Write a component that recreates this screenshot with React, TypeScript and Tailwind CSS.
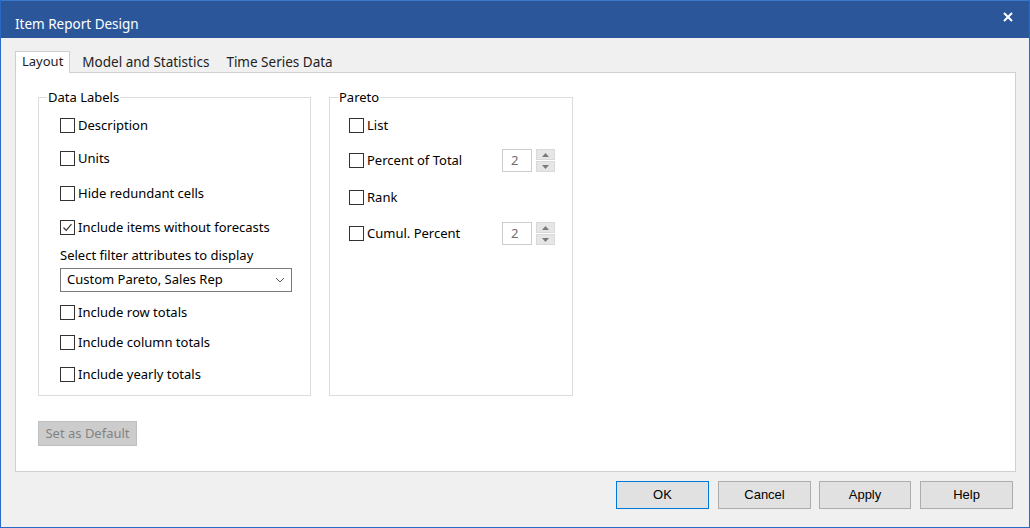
import React from "react";

const font = { fontFamily: '"Noto Sans", "Open Sans", sans-serif' };

function Check({ label, checked = false }: { label: string; checked?: boolean }) {
  return (
    <div className="flex items-center h-[16px]">
      <div className="w-[15px] h-[15px] border border-[#333333] bg-white flex items-center justify-center mr-[3px] shrink-0">
        {checked && (
          <svg width="11" height="11" viewBox="0 0 11 11">
            <path d="M1.5 5.5 L4.2 8.3 L9.5 2.2" fill="none" stroke="#333" strokeWidth="1.2" />
          </svg>
        )}
      </div>
      <span className="text-[13px] text-black leading-none whitespace-nowrap">{label}</span>
    </div>
  );
}

function Spin() {
  return (
    <div className="flex items-center gap-[4px]">
      <div className="w-[30px] h-[23px] border border-[#cccccc] bg-white text-[13px] text-[#6d6d6d] flex items-center pl-[8px]">2</div>
      <div className="w-[19px] h-[23px] flex flex-col gap-[1px]">
        <div className="flex-1 bg-[#e6e6e6] border border-[#d9d9d9] flex items-center justify-center">
          <svg width="7" height="4" viewBox="0 0 7 4"><path d="M0 4 L3.5 0 L7 4Z" fill="#7a7a7a" /></svg>
        </div>
        <div className="flex-1 bg-[#e6e6e6] border border-[#d9d9d9] flex items-center justify-center">
          <svg width="7" height="4" viewBox="0 0 7 4"><path d="M0 0 L3.5 4 L7 0Z" fill="#7a7a7a" /></svg>
        </div>
      </div>
    </div>
  );
}

function Btn({ label, primary = false, w = 93 }: { label: string; primary?: boolean; w?: number }) {
  return (
    <div
      className={`h-[28px] bg-[#e1e1e1] border ${primary ? "border-[#0078d7]" : "border-[#adadad]"} flex items-center justify-center text-[13px] text-black`}
      style={{ fontFamily: '"Liberation Sans", Arial, sans-serif', width: w }}
    >
      {label}
    </div>
  );
}

export default function App() {
  return (
    <div className="w-[1030px] h-[528px] bg-[#f0f0f0] border border-[#2a6ac4] border-t-0 flex flex-col overflow-hidden" style={font}>
      <div className="h-[38px] bg-[#2b579a] border-t border-[#3a78cc] flex items-center justify-between pl-[14px] pr-[16px] pt-[9px] shrink-0">
        <span className="text-white text-[13.5px]">Item Report Design</span>
        <svg width="10" height="10" viewBox="0 0 10 10" className="-mt-[14px]">
          <path d="M1 1 L9 9 M9 1 L1 9" stroke="white" strokeWidth="2" />
        </svg>
      </div>
      <div className="flex flex-col pl-[14px] pr-[13px] pt-[12px]">
        <div className="flex items-end h-[22px] text-[13.5px] text-[#222]">
          <div className="h-[22px] px-[6px] bg-white border border-[#cfcfcf] border-b-0 flex items-center relative z-10 -mb-[1px] pb-[1px] text-[13px]">
            Layout
          </div>
          <div className="h-[20px] pl-[12px] pr-[9px] flex items-center">Model and Statistics</div>
          <div className="h-[20px] px-[8px] flex items-center">Time Series Data</div>
        </div>
        <div className="h-[400px] bg-white border border-[#d0d0d0] pl-[22px] pt-[16px] flex flex-col">
          <div className="flex gap-[18px]">
            <fieldset className="w-[273px] h-[307px] border border-[#dcdcdc] pl-[21px] pr-[8px] m-0 pt-0">
              <legend className="text-[13px] text-black px-[1px] ml-[-13px] leading-[16px]">Data Labels</legend>
              <div className="flex flex-col pt-[12px]">
                <Check label="Description" />
                <div className="h-[17px]" />
                <Check label="Units" />
                <div className="h-[19px]" />
                <Check label="Hide redundant cells" />
                <div className="h-[18px]" />
                <Check label="Include items without forecasts" checked />
                <div className="mt-[12px] text-[13px] leading-[16px] text-black">Select filter attributes to display</div>
                <div className="mt-[5px] w-[232px] h-[24px] border border-[#7a7a7a] bg-white flex items-center justify-between pl-[6px] pr-[6px] text-[13px]">
                  <span>Custom Pareto, Sales Rep</span>
                  <svg width="10" height="6" viewBox="0 0 10 6"><path d="M1 1 L5 5 L9 1" fill="none" stroke="#555" strokeWidth="1" /></svg>
                </div>
                <div className="h-[12px]" />
                <Check label="Include row totals" />
                <div className="h-[14px]" />
                <Check label="Include column totals" />
                <div className="h-[16px]" />
                <Check label="Include yearly totals" />
              </div>
            </fieldset>
            <fieldset className="w-[244px] h-[307px] border border-[#dcdcdc] pl-[19px] pr-[17px] m-0 pt-0">
              <legend className="text-[13px] text-black px-[1px] ml-[-11px] leading-[16px]">Pareto</legend>
              <div className="flex flex-col pt-[12px]">
                <Check label="List" />
                <div className="flex items-center justify-between mt-[16px] h-[23px]">
                  <Check label="Percent of Total" />
                  <Spin />
                </div>
                <div className="h-[17px]" />
                <Check label="Rank" />
                <div className="flex items-center justify-between mt-[17px] h-[23px]">
                  <Check label="Cumul. Percent" />
                  <Spin />
                </div>
              </div>
            </fieldset>
          </div>
          <div className="mt-[25px] w-[99px] h-[25px] bg-[#cccccc] border border-[#bfbfbf] flex items-center justify-center text-[13px] text-[#838383]">
            Set as Default
          </div>
        </div>
        <div className="flex justify-end mt-[9px] pr-[3px]">
          <Btn label="OK" primary />
          <div className="w-[9px]" />
          <Btn label="Cancel" />
          <div className="w-[8px]" />
          <Btn label="Apply" w={92} />
          <div className="w-[9px]" />
          <Btn label="Help" />
        </div>
      </div>
    </div>
  );
}
